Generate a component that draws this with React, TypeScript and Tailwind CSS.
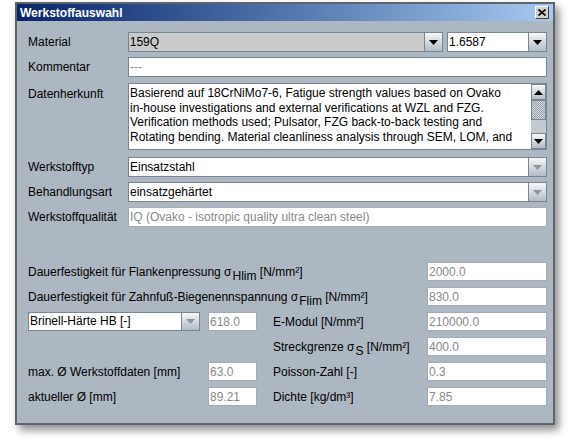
import React from 'react'

const font = "font-['Liberation_Sans',Arial,sans-serif]"

function Arrow({ disabled, className = '' }: { disabled?: boolean; className?: string }) {
  return (
    <div className={`w-[18px] shrink-0 h-full flex items-center justify-center border-l border-[#7a8592] bg-linear-to-b from-[#f6f7f9] to-[#b3bcc6] ${className}`}>
      <svg width="9" height="5" viewBox="0 0 9 5">
        <path d="M0 0h9L4.5 5z" fill={disabled ? '#8f969e' : '#000'} />
      </svg>
    </div>
  )
}

function Combo({ value, w, gray, disabled }: { value: string; w: string; gray?: boolean; disabled?: boolean }) {
  return (
    <div className={`flex h-[20px] border border-[#7a8592] ${w} ${gray ? 'bg-[#cacaca]' : 'bg-white'}`}>
      <div className="flex-1 pl-[1px] leading-[18px] whitespace-nowrap overflow-hidden">{value}</div>
      <Arrow disabled={disabled} />
    </div>
  )
}

function Field({ value, w = 'w-full', muted, dark, h = 'h-[20px]' }: { value: string; w?: string; muted?: boolean; dark?: boolean; h?: string }) {
  return (
    <div className={`${h} ${w} shrink-0 bg-white border leading-[18px] pl-[1px] whitespace-nowrap overflow-hidden ${dark ? 'border-[#7a8592]' : 'border-[#a3abb4]'} ${muted ? 'text-[#8a8a8a]' : 'text-black'}`}>
      {value}
    </div>
  )
}

function Sub({ children }: { children: React.ReactNode }) {
  return <sub className="text-[12px] -bottom-1 ml-[1px]">{children}</sub>
}

function ScrollBtn({ up }: { up?: boolean }) {
  return (
    <div className="h-[16px] flex items-center justify-center border border-[#7a8592] bg-linear-to-b from-[#f6f7f9] to-[#b3bcc6]">
      <svg width="9" height="5" viewBox="0 0 9 5">
        <path d={up ? 'M4.5 0L9 5H0z' : 'M0 0h9L4.5 5z'} fill="#000" />
      </svg>
    </div>
  )
}

export default function App() {
  const lines = [
    'Basierend auf 18CrNiMo7-6, Fatigue strength values based on Ovako',
    'in-house investigations and external verifications at WZL and FZG.',
    'Verification methods used; Pulsator, FZG back-to-back testing and',
    'Rotating bending. Material cleanliness analysis through SEM, LOM, and',
  ]

  return (
    <div className={`min-h-[442px] bg-white pl-[15px] pt-[2px] text-[12px] text-black ${font}`}>
      <div className="w-[540px] border-2 border-[#5f636a] shadow-[4px_5px_8px_rgba(0,0,0,0.45)]">
        {/* title bar */}
        <div className="h-[17px] flex items-center justify-between pl-[3px] pr-[4px] bg-linear-to-r from-[#0a246a] to-[#a6caf0]">
          <span className="text-white font-bold text-[12px] leading-none">Werkstoffauswahl</span>
          <div className="w-[14px] h-[13px] bg-[#d4d0c8] border border-t-white border-l-white border-b-[#404040] border-r-[#404040] flex items-center justify-center">
            <svg width="8" height="7" viewBox="0 0 8 7">
              <path d="M0.5 0.5L7.5 6.5M7.5 0.5L0.5 6.5" stroke="#000" strokeWidth="1.6" />
            </svg>
          </div>
        </div>

        {/* body */}
        <div className="bg-[#adb7c1] pl-[11px] pr-[6px] pt-[11px] pb-[17px]">
          <div className="flex items-center h-[20px]">
            <div className="w-[100px]">Material</div>
            <Combo value="159Q" w="w-[316px]" gray />
            <div className="ml-[4px]">
              <Combo value="1.6587" w="w-[100px]" />
            </div>
          </div>

          <div className="flex items-center mt-[5px]">
            <div className="w-[100px] shrink-0">Kommentar</div>
            <Field value="---" muted dark w="flex-1" />
          </div>

          <div className="flex mt-[6px]">
            <div className="w-[100px] shrink-0 pt-[2px]">Datenherkunft</div>
            <div className="flex-1 h-[67px] flex bg-white border border-[#7a8592]">
              <div className="flex-1 pl-[1px] pt-[2px] overflow-hidden">
                {lines.map((l) => (
                  <div key={l} className="leading-[14.5px] whitespace-nowrap">{l}</div>
                ))}
              </div>
              <div className="w-[15px] flex flex-col bg-[#c3cad2]">
                <ScrollBtn up />
                <div className="h-[20px] border border-[#7a8592] bg-[repeating-conic-gradient(#95a0ab_0%_25%,#d6dbe0_0%_50%)] bg-[length:2px_2px]" />
                <div className="flex-1" />
                <ScrollBtn />
              </div>
            </div>
          </div>

          <div className="flex items-center mt-[7px]">
            <div className="w-[100px] shrink-0">Werkstofftyp</div>
            <Combo value="Einsatzstahl" w="flex-1" disabled />
          </div>
          <div className="flex items-center mt-[5px]">
            <div className="w-[100px] shrink-0">Behandlungsart</div>
            <Combo value="einsatzgehärtet" w="flex-1" disabled />
          </div>
          <div className="flex items-center mt-[5px]">
            <div className="w-[100px] shrink-0">Werkstoffqualität</div>
            <Field value="IQ (Ovako - isotropic quality ultra clean steel)" muted w="flex-1" />
          </div>

          {/* strength values */}
          <div className="mt-[35px] flex flex-col gap-[6px]">
            <div className="flex items-center">
              <div className="flex-1">Dauerfestigkeit für Flankenpressung σ<Sub>Hlim</Sub> [N/mm²]</div>
              <Field value="2000.0" muted w="w-[120px]" h="h-[19px]" />
            </div>
            <div className="flex items-center">
              <div className="flex-1">Dauerfestigkeit für Zahnfuß-Biegenennspannung σ<Sub>Flim</Sub> [N/mm²]</div>
              <Field value="830.0" muted w="w-[120px]" h="h-[19px]" />
            </div>
            <div className="flex items-center">
              <div className="w-[245px] flex items-center shrink-0">
                <div className="flex h-[19px] w-[172px] bg-white border border-[#7a8592]">
                  <div className="flex-1 pl-[1px] leading-[17px]">Brinell-Härte HB [-]</div>
                  <Arrow disabled />
                </div>
                <div className="ml-[8px]">
                  <Field value="618.0" muted w="w-[49px]" h="h-[19px]" />
                </div>
              </div>
              <div className="flex-1">E-Modul [N/mm²]</div>
              <Field value="210000.0" muted w="w-[120px]" h="h-[19px]" />
            </div>
            <div className="flex items-center">
              <div className="w-[245px] shrink-0" />
              <div className="flex-1">Streckgrenze σ<Sub>S</Sub> [N/mm²]</div>
              <Field value="400.0" muted w="w-[120px]" h="h-[19px]" />
            </div>
            <div className="flex items-center">
              <div className="w-[245px] flex items-center shrink-0">
                <div className="w-[180px]">max. Ø Werkstoffdaten [mm]</div>
                <Field value="63.0" muted w="w-[49px]" h="h-[19px]" />
              </div>
              <div className="flex-1">Poisson-Zahl [-]</div>
              <Field value="0.3" muted w="w-[120px]" h="h-[19px]" />
            </div>
            <div className="flex items-center">
              <div className="w-[245px] flex items-center shrink-0">
                <div className="w-[180px]">aktueller Ø [mm]</div>
                <Field value="89.21" muted w="w-[49px]" h="h-[19px]" />
              </div>
              <div className="flex-1">Dichte [kg/dm³]</div>
              <Field value="7.85" muted w="w-[120px]" h="h-[19px]" />
            </div>
          </div>
        </div>
      </div>
    </div>
  )
}
